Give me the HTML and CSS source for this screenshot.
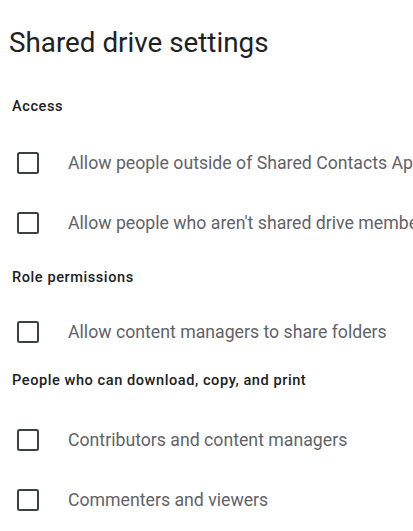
FILE: index.html
```html
<!DOCTYPE html>
<html lang="en">
<head>
<meta charset="utf-8">
<title>Shared drive settings</title>
<link rel="stylesheet" href="styles.css">
</head>
<body>
<main class="dialog">
  <h1 class="title">Shared drive settings</h1>

  <section class="group group-access">
    <h2 class="group-title">Access</h2>
    <label class="option"><span class="box"></span><span class="label">Allow people outside of Shared Contacts Apps to access files</span></label>
    <label class="option"><span class="box"></span><span class="label">Allow people who aren't shared drive members to access files</span></label>
  </section>

  <section class="group group-role">
    <h2 class="group-title">Role permissions</h2>
    <label class="option"><span class="box"></span><span class="label">Allow content managers to share folders</span></label>
  </section>

  <section class="group group-download">
    <h2 class="group-title">People who can download, copy, and print</h2>
    <label class="option"><span class="box"></span><span class="label">Contributors and content managers</span></label>
    <label class="option"><span class="box"></span><span class="label">Commenters and viewers</span></label>
  </section>
</main>
</body>
</html>
```

FILE: styles.css
```css
html, body {
  margin: 0;
  padding: 0;
  background: #ffffff;
  overflow: hidden;
}

.dialog {
  font-family: Roboto, "Noto Sans", Arial, sans-serif;
  color: #202124;
  box-sizing: border-box;
  padding-top: 27px;
  width: 413px;
  height: 531px;
  overflow: hidden;
}

.title {
  margin: 0;
  padding-left: 9px;
  font-size: 27.8px;
  line-height: 32px;
  font-weight: 400;
  color: #202124;
  white-space: nowrap;
}

.group {
  display: flex;
  flex-direction: column;
}

.group-title {
  margin: 0;
  padding-left: 12px;
  font-size: 14.6px;
  letter-spacing: 0.55px;
  line-height: 20px;
  font-weight: 500;
  color: #202124;
  white-space: nowrap;
}

.group-access { margin-top: 37px; }
.group-access .group-title { margin-bottom: 17px; }

.group-role { margin-top: 14px; }
.group-role .group-title { margin-bottom: 15px; }

.group-download { margin-top: 8px; }
.group-download .group-title { margin-bottom: 20px; }

.option {
  display: flex;
  align-items: center;
  height: 60px;
  white-space: nowrap;
}

.box {
  flex: none;
  box-sizing: border-box;
  width: 22px;
  height: 22px;
  margin-left: 17px;
  border: 2.4px solid #3c4043;
  border-radius: 2.5px;
}

.label {
  margin-left: 29px;
  font-size: 17.7px;
  line-height: 24px;
  color: #5f6368;
}
```
